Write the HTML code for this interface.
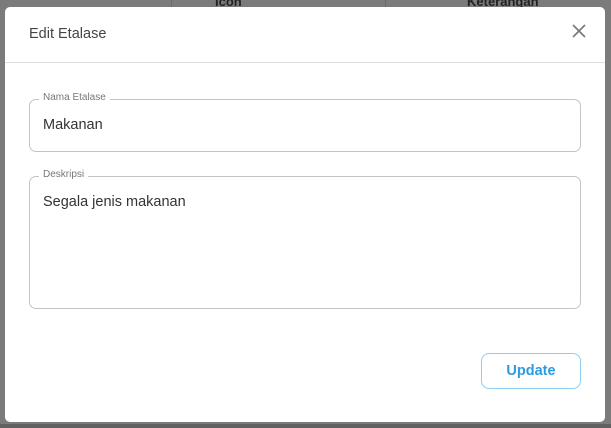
<!DOCTYPE html>
<html><head><meta charset="utf-8"><style>
*{margin:0;padding:0;box-sizing:border-box}
body{width:611px;height:428px;overflow:hidden;background:#616161;font-family:"Liberation Sans",sans-serif;position:relative}
.bg{position:absolute;left:0;top:0;width:611px;height:424px;background:#7b7b7b}
.bgline{position:absolute;left:0;top:34px;width:611px;height:1px;background:#6e6e6e}
.vl{position:absolute;top:0;width:1px;height:20px;background:#6a6a6a}
.bgt{position:absolute;top:-6px;font-size:13px;font-weight:bold;color:#222}
.modal{position:absolute;left:5px;top:7px;width:600px;height:415px;background:#fff;border-radius:5px}
.hd{height:56px;border-bottom:1px solid #dedede;position:relative}
.title{position:absolute;left:24px;top:19px;font-size:14.5px;color:#444}
.x{position:absolute;left:566px;top:16px}
.field{position:absolute;left:24px;width:552px;border:1px solid #c4c4c4;border-radius:7px}
.lab{position:absolute;left:9px;top:-8px;background:#fff;padding:0 4px;font-size:10px;color:#777}
.val{position:absolute;left:13px;font-size:14.5px;color:#333}
.btn{position:absolute;left:476px;top:346px;width:100px;height:36px;border:1px solid #8fcdf0;border-radius:8px;color:#2a9ce0;font-size:14.5px;font-weight:bold;text-align:center;line-height:34px}
</style></head><body>
<div class="bg"></div>
<div class="vl" style="left:171px"></div><div class="vl" style="left:385px"></div>
<div class="bgt" style="left:215px">Icon</div>
<div class="bgt" style="left:467px">Keterangan</div>
<div class="modal">
 <div class="hd"><div class="title">Edit Etalase</div>
  <svg class="x" width="16" height="16" viewBox="0 0 16 16"><path d="M2 2L14 14M14 2L2 14" stroke="#777" stroke-width="1.6"/></svg></div>
 <div class="field" style="top:92px;height:53px"><div class="lab">Nama Etalase</div><div class="val" style="top:17px">Makanan</div></div>
 <div class="field" style="top:169px;height:133px"><div class="lab">Deskripsi</div><div class="val" style="top:17px">Segala jenis makanan</div></div>
 <div class="btn">Update</div>
</div>
</body></html>
